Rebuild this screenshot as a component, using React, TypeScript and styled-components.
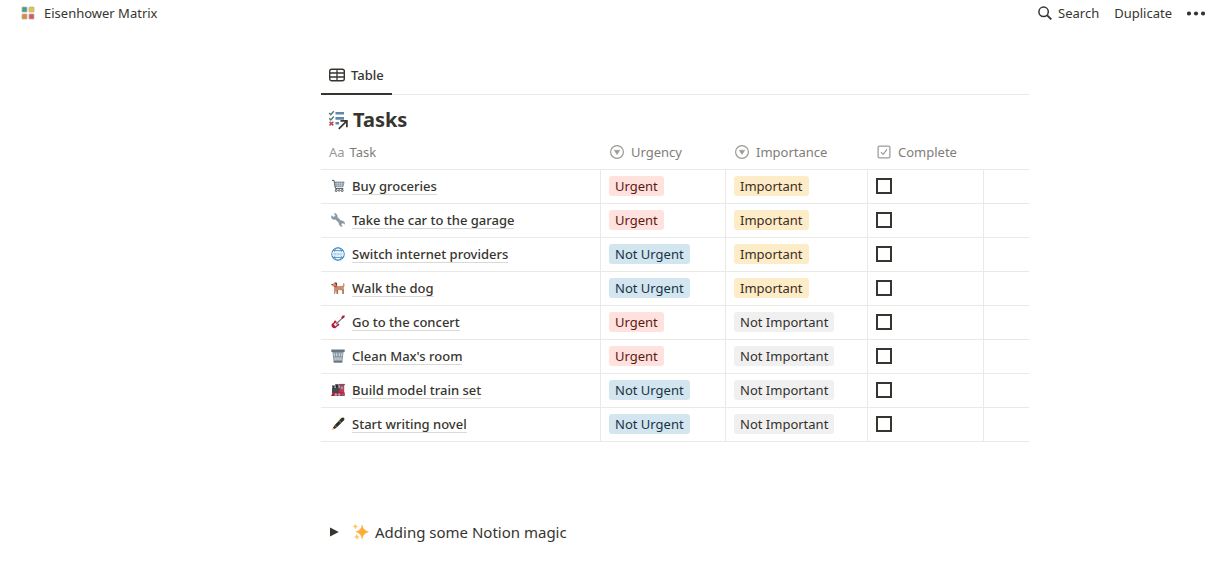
import React from 'react';
import styled, { createGlobalStyle } from 'styled-components';

const GlobalStyle = createGlobalStyle`
  *, *::before, *::after { box-sizing: border-box; }
  body {
    margin: 0;
    background: #fff;
    color: #37352f;
    font-family: "Noto Sans", "Open Sans", sans-serif;
    font-size: 13px;
    line-height: 20px;
  }
`;

const TopBar = styled.header`
  display: flex;
  align-items: center;
  justify-content: space-between;
  height: 28px;
  padding: 0 9px 2px 20px;
`;

const Crumb = styled.a`
  display: flex;
  align-items: center;
  gap: 8px;
  color: inherit;
  text-decoration: none;
`;

const Actions = styled.nav`
  display: flex;
  align-items: center;
  gap: 15px;
`;

const PlainButton = styled.button`
  display: flex;
  align-items: center;
  gap: 6px;
  padding: 0;
  border: 0;
  background: none;
  color: inherit;
  font: inherit;
  cursor: pointer;
`;

const Content = styled.main`
  padding: 28px 185px 24px 321px;
`;

const Tabs = styled.div`
  display: flex;
  height: 39px;
  border-bottom: 1px solid #e9e9e7;
`;

const Tab = styled.button`
  display: flex;
  align-items: center;
  gap: 6px;
  height: 39px;
  padding: 0 8px;
  border: 0;
  border-bottom: 2px solid #37352f;
  background: none;
  color: inherit;
  font: inherit;
  font-weight: 500;
  cursor: pointer;
`;

const Title = styled.h1`
  display: flex;
  align-items: center;
  gap: 5px;
  height: 41px;
  margin: 0;
  padding: 8px 7px 0;
  font-size: 20px;
  line-height: 28px;
  font-weight: 700;
`;

const Table = styled.table`
  width: 100%;
  table-layout: fixed;
  border-collapse: separate;
  border-spacing: 0;
`;

const Col = styled.col<{ $width?: number }>`
  width: ${({ $width }) => ($width ? `${$width}px` : 'auto')};
`;

const HeadCell = styled.th`
  height: 34px;
  padding: 0 10px 2px;
  border-bottom: 1px solid #e9e9e7;
  color: #7f7d78;
  font-weight: 400;
  text-align: left;
  &:first-child { padding-left: 8px; }
`;

const HeadLabel = styled.div<{ $gap?: number }>`
  display: flex;
  align-items: center;
  gap: ${({ $gap = 7 }) => $gap}px;
`;

const TypeMark = styled.span`
  color: #9b9a97;
`;

const Cell = styled.td`
  height: 34px;
  padding: 0 8px 1px;
  border-bottom: 1px solid #e9e9e7;
  border-left: 1px solid #e9e9e7;
  &:first-child { border-left: 0; padding-left: 10px; }
`;

const TaskRow = styled.div`
  display: flex;
  align-items: center;
  gap: 7px;
`;

const TaskLink = styled.a`
  height: 18px;
  border-bottom: 1px solid #d9d9d7;
  color: inherit;
  font-weight: 500;
  line-height: 18px;
  text-decoration: none;
  white-space: nowrap;
`;

type Tone = 'red' | 'blue' | 'yellow' | 'gray';
const tones: Record<Tone, { bg: string; fg: string }> = {
  red: { bg: '#ffe2dd', fg: '#5d1715' },
  blue: { bg: '#d3e5ef', fg: '#183347' },
  yellow: { bg: '#fdecc8', fg: '#402c1b' },
  gray: { bg: '#f1f0f0', fg: '#32302c' },
};

const Tag = styled.span<{ $tone: Tone }>`
  display: block;
  width: fit-content;
  padding: 0 6px;
  border-radius: 3px;
  background: ${({ $tone }) => tones[$tone].bg};
  color: ${({ $tone }) => tones[$tone].fg};
  white-space: nowrap;
`;

const Check = styled.input`
  appearance: none;
  display: block;
  width: 16px;
  height: 16px;
  margin: 0;
  border: 2px solid #37352f;
  background: #fff;
  &:checked { background: #2eaadc; }
`;

const Toggle = styled.button`
  display: flex;
  align-items: center;
  margin-top: 78px;
  padding: 0 8px;
  border: 0;
  background: none;
  color: inherit;
  font: inherit;
  font-size: 15px;
  line-height: 24px;
  cursor: pointer;
`;

const ToggleText = styled.span`
  display: flex;
  align-items: center;
  gap: 6px;
  padding-left: 14px;
`;

const Svg = styled.svg`
  display: block;
  flex: none;
`;

type IconProps = { size?: number; view?: number; children: React.ReactNode };
const Icon = ({ size = 14, view = 14, children }: IconProps) => (
  <Svg width={size} height={size} viewBox={`0 0 ${view} ${view}`} fill="none" aria-hidden="true">
    {children}
  </Svg>
);

const MatrixIcon = () => (
  <Icon size={16} view={16}>
    <g stroke="#b3b3b0" strokeWidth=".8">
      <rect x="2" y="2" width="5" height="5" rx=".6" fill="#4f9c86" />
      <rect x="9" y="2" width="5" height="5" rx=".6" fill="#e9c03f" />
      <rect x="2" y="9" width="5" height="5" rx=".6" fill="#e08a3c" />
      <rect x="9" y="9" width="5" height="5" rx=".6" fill="#df5452" />
    </g>
  </Icon>
);

const SearchIcon = () => (
  <Icon>
    <circle cx="5.6" cy="5.8" r="4.7" stroke="#37352f" strokeWidth="1.5" />
    <path d="M9.2 9.4L13.3 13.4" stroke="#37352f" strokeWidth="1.9" />
  </Icon>
);

const DotsIcon = () => (
  <Icon size={18} view={18}>
    <g fill="#37352f">
      <circle cx="2" cy="9.5" r="2.1" />
      <circle cx="9" cy="9.5" r="2.1" />
      <circle cx="16" cy="9.5" r="2.1" />
    </g>
  </Icon>
);

const TableIcon = () => (
  <Icon size={16} view={16}>
    <rect x=".7" y="2.2" width="14.6" height="11.6" rx="2" stroke="#37352f" strokeWidth="1.4" />
    <path d="M1 6H15M1 10H15M8 2.5V13.5" stroke="#37352f" strokeWidth="1.3" />
  </Icon>
);

const TasksIcon = () => (
  <Icon size={20} view={20}>
    <path d="M1.2 3l1.6 1.7L5.8 1.2M1.2 8.2l1.6 1.7L5.8 6.6" stroke="#4f7f78" strokeWidth="1.5" />
    <path d="M1.5 11.8l3.8 3.6M5.3 11.8l-3.8 3.6" stroke="#b9484c" strokeWidth="1.5" />
    <path d="M7.5 3.2H16M7.5 8.4H16M7.5 13.2H11" stroke="#5d89ad" strokeWidth="2.6" />
    <path d="M10.6 19.4L18.6 11.4" stroke="#fff" strokeWidth="4" />
    <path d="M10.8 18.8L18.4 11.4M12.5 10.9H18.9V17.2" stroke="#37352f" strokeWidth="1.7" />
  </Icon>
);

const SelectIcon = () => (
  <Icon>
    <circle cx="7" cy="7" r="6.4" stroke="#9b9a97" strokeWidth="1.2" />
    <path d="M4.2 5.2H9.8L7 9.6Z" fill="#9b9a97" stroke="#9b9a97" strokeWidth=".5" strokeLinejoin="round" />
  </Icon>
);

const CheckboxIcon = () => (
  <Icon>
    <rect x="1.1" y="1.1" width="11.8" height="11.8" rx="1.2" stroke="#9b9a97" strokeWidth="1.2" />
    <path d="M4 7.2L6.1 9.4L10 4.4" stroke="#9b9a97" strokeWidth="1.2" />
  </Icon>
);

const CartIcon = () => (
  <Icon>
    <path d="M1 1.4H3L4.5 9.6H12.4" stroke="#4d5a63" strokeWidth="1" />
    <path d="M3.2 3H13.1L12 7.8H4.1Z" fill="#87949e" stroke="#5f6d77" strokeWidth=".6" />
    <path d="M4 4.6H12.7M4.2 6.2H12.4M6 3L6.4 8M8.3 3V8M10.7 3L10.3 8" stroke="#d4dbe0" strokeWidth=".5" />
    <circle cx="5.2" cy="11.5" r="1" stroke="#292f33" strokeWidth=".8" />
    <circle cx="8.2" cy="11.5" r=".8" stroke="#292f33" strokeWidth=".7" />
    <circle cx="11.2" cy="11.5" r="1" stroke="#292f33" strokeWidth=".8" />
  </Icon>
);

const WrenchIcon = () => (
  <Icon>
    <path
      d="M3.2.3L4.3 2.3L4 3.6L2.6 3.9L.3 2.8C.1 4.7 1 6.2 2.5 6.5C3.3 6.7 4 6.5 4.5 6.3L7.9 9.7C7.7 11.6 9 13.5 11.3 13.6L10.2 11.5L10.7 10.4L11.8 10.1L14 11.2C13.8 8.8 12 7.4 10 7.7L6.4 4.2C6.6 2 5.3.3 3.2.3Z"
      fill="#8899a6"
      stroke="#8899a6"
      strokeWidth=".4"
    />
  </Icon>
);

const GlobeIcon = () => (
  <Icon>
    <circle cx="7" cy="7" r="6.2" stroke="#3b88c3" strokeWidth="1.1" fill="#f4f9fd" />
    <ellipse cx="7" cy="7" rx="3.8" ry="6.2" stroke="#3b88c3" strokeWidth=".6" />
    <path d="M2.2 3.6H11.8M2.2 10.4H11.8" stroke="#3b88c3" strokeWidth=".9" />
    <rect x="1.7" y="5" width="10.6" height="4" fill="#e6f1fa" />
    <path d="M3.2 6v1.9h1.3V6M6 6v1.9h1.5V6M9 6v1.9h1.6V6" stroke="#8fbce0" strokeWidth=".6" />
  </Icon>
);

const DogIcon = () => (
  <Icon>
    <path d="M3.4 1.4L5.4 2.6L6 5H10.8L12.1 4.2L12.2 2L13.4 2.4L13.5 5L12.7 6.8V13H11.2L11 9.7L10.2 9.2L7 9V13H5.4L5 9.6L4.1 13H3L3.1 6.1L.8 4.6L.7 3.2L2.4 2.4Z" fill="#c88f70" />
    <path d="M3.6 1.3L6 1.7L6.2 4.3L5.2 5L4.5 2.7ZM.4 3H1.6V4.1H.5Z" fill="#70392d" />
    <path d="M3 5.1L5.9 5.3V6.2L3.1 6Z" fill="#dd2e44" />
    <path d="M6 9L7.1 8.8V13H6ZM11.8 8H12.7V13H11.8Z" fill="#a96c50" />
  </Icon>
);

const GuitarIcon = () => (
  <Icon>
    <path d="M5.2 6.2C4.6 5 3.2 5.3 3 6.7C2.8 7.8 1.3 7.8.7 9.3C-.1 11.5 1.8 13.7 4 13.2C5.6 12.8 5.4 11.4 6.6 11.2C7.7 11 8.7 10.2 8.2 9C7.6 8.9 7.4 9 7 8.6Z" fill="#be1931" />
    <path d="M2.7 9L5.4 7.2L6.9 9L4 11.8Z" fill="#f4e6e8" />
    <path d="M5.2 9L11.5 2.9" stroke="#66757f" strokeWidth="1.1" />
    <path d="M2.6 10.2L4.1 11.7" stroke="#292f33" strokeWidth=".8" />
    <path d="M10.2 2.5L11.6.5L13.8.4L13.5 2.3L11.5 3.9Z" fill="#be1931" />
  </Icon>
);

const BasketIcon = () => (
  <Icon>
    <path d="M1.3 2H12.7L11.3 13.4H2.7Z" fill="#8899a6" />
    <path d="M.3.5H13.7V3H.3Z" fill="#66757f" />
    <path d="M3 4.2L3.6 7M5.6 4.2L5.8 7M8.4 4.2L8.2 7M11 4.2L10.4 7M3.9 8.3L4.3 11.2M6 8.3L6.1 11.2M8 8.3L7.9 11.2M10.1 8.3L9.7 11.2" stroke="#e1e8ed" strokeWidth=".9" />
    <path d="M2.6 12H11.4L11.2 13.5H2.8Z" fill="#66757f" />
  </Icon>
);

const TrainIcon = () => (
  <Icon>
    <path d="M1 5H9V10H1Z" fill="#414b52" />
    <path d="M1 2.4H3.8L3.4 5.4H1.7ZM4.2 1.3H7.6V5H4.6Z" fill="#292f33" />
    <path d="M8.4 2H13.2V10.4H8.4Z" fill="#dd2e44" />
    <path d="M7.8.9H13.9V2.2H7.8Z" fill="#5a646c" />
    <path d="M9.8 3.5H12.2V6.2H9.8Z" fill="#55acee" />
    <path d="M.1 12.9L1.6 9.4H13.7V12.9Z" fill="#be1931" />
    <circle cx="4.8" cy="11.6" r="1.4" fill="#99aab5" />
    <circle cx="8.2" cy="11.6" r="1.4" fill="#99aab5" />
    <circle cx="11.9" cy="11.6" r="1.4" fill="#66757f" />
  </Icon>
);

const PenIcon = () => (
  <Icon>
    <path d="M.7 13.3L2 10.4L3.5 12Z" fill="#ffac33" />
    <path d="M2 10.5L4 7.8L10.6 1.1C11.6.1 12.9.5 13.1 1C13.6 1.7 13.6 2.4 12.8 3.4L6.2 10L3.5 12Z" fill="#292f33" />
    <path d="M3.6 8.2L5.8 10.4M8 3.6L10.3 5.9" stroke="#ffac33" strokeWidth=".8" />
    <path d="M7.8 2.5L10.9 0" stroke="#ffac33" strokeWidth=".6" />
  </Icon>
);

const TriangleIcon = () => (
  <Icon size={10} view={10}>
    <path d="M1 .4L9.8 5L1 9.6Z" fill="#37352f" />
  </Icon>
);

const SparklesIcon = () => (
  <Icon size={16} view={16}>
    <path d="M9.2 1.2Q10 6.5 15.4 7.8Q10 9.1 9.2 14.7Q8.2 9.1 3 7.8Q8.2 6.5 9.2 1.2Z" fill="#ffac33" stroke="#ffac33" strokeWidth=".6" />
    <path d="M2.3.3Q2.6 2.2 4.6 2.6Q2.6 3 2.3 5Q2 3 .2 2.6Q2 2.2 2.3.3ZM3.9 10.5Q4.2 12.5 6 12.9Q4.2 13.3 3.9 15.4Q3.5 13.3 1.6 12.9Q3.5 12.5 3.9 10.5Z" fill="#ffc45e" stroke="#ffc45e" strokeWidth=".4" />
  </Icon>
);

type Task = { name: string; icon: React.ReactNode; urgent: boolean; important: boolean };
const tasks: Task[] = [
  { name: 'Buy groceries', icon: <CartIcon />, urgent: true, important: true },
  { name: 'Take the car to the garage', icon: <WrenchIcon />, urgent: true, important: true },
  { name: 'Switch internet providers', icon: <GlobeIcon />, urgent: false, important: true },
  { name: 'Walk the dog', icon: <DogIcon />, urgent: false, important: true },
  { name: 'Go to the concert', icon: <GuitarIcon />, urgent: true, important: false },
  { name: "Clean Max's room", icon: <BasketIcon />, urgent: true, important: false },
  { name: 'Build model train set', icon: <TrainIcon />, urgent: false, important: false },
  { name: 'Start writing novel', icon: <PenIcon />, urgent: false, important: false },
];

export default function App() {
  return (
    <>
      <GlobalStyle />
      <TopBar>
        <Crumb href="#matrix"><MatrixIcon />Eisenhower Matrix</Crumb>
        <Actions>
          <PlainButton type="button"><SearchIcon />Search</PlainButton>
          <PlainButton type="button">Duplicate</PlainButton>
          <PlainButton type="button" aria-label="More"><DotsIcon /></PlainButton>
        </Actions>
      </TopBar>
      <Content>
        <Tabs role="tablist">
          <Tab type="button" role="tab" aria-selected="true"><TableIcon />Table</Tab>
        </Tabs>
        <Title><TasksIcon />Tasks</Title>
        <Table>
          <colgroup>
            <Col $width={279} />
            <Col $width={125} />
            <Col $width={142} />
            <Col $width={116} />
            <Col />
          </colgroup>
          <thead>
            <tr>
              <HeadCell scope="col"><HeadLabel $gap={5}><TypeMark aria-hidden="true">Aa</TypeMark>Task</HeadLabel></HeadCell>
              <HeadCell scope="col"><HeadLabel><SelectIcon />Urgency</HeadLabel></HeadCell>
              <HeadCell scope="col"><HeadLabel><SelectIcon />Importance</HeadLabel></HeadCell>
              <HeadCell scope="col"><HeadLabel><CheckboxIcon />Complete</HeadLabel></HeadCell>
              <HeadCell as="td" />
            </tr>
          </thead>
          <tbody>
            {tasks.map((task) => (
              <tr key={task.name}>
                <Cell><TaskRow>{task.icon}<TaskLink href="#task">{task.name}</TaskLink></TaskRow></Cell>
                <Cell><Tag $tone={task.urgent ? 'red' : 'blue'}>{task.urgent ? 'Urgent' : 'Not Urgent'}</Tag></Cell>
                <Cell><Tag $tone={task.important ? 'yellow' : 'gray'}>{task.important ? 'Important' : 'Not Important'}</Tag></Cell>
                <Cell><Check type="checkbox" aria-label={`${task.name} complete`} /></Cell>
                <Cell />
              </tr>
            ))}
          </tbody>
        </Table>
        <Toggle type="button" aria-expanded="false">
          <TriangleIcon />
          <ToggleText><SparklesIcon />Adding some Notion magic</ToggleText>
        </Toggle>
      </Content>
    </>
  );
}
